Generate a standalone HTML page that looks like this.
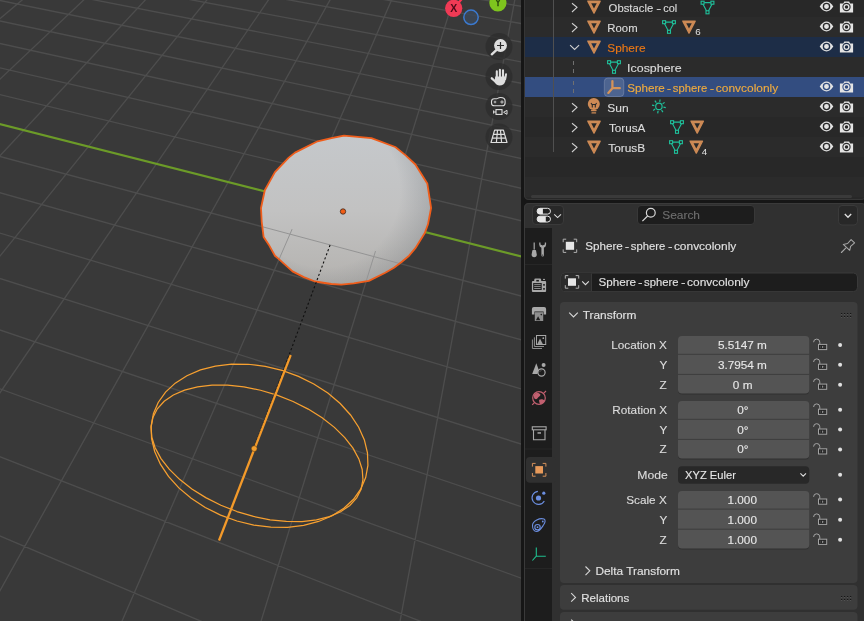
<!DOCTYPE html>
<html><head><meta charset="utf-8"><style>
html,body{margin:0;padding:0;background:#161616;overflow:hidden;width:864px;height:621px}
svg{display:block;will-change:transform}
text{font-family:"Liberation Sans",sans-serif;font-size:11px}
</style></head><body>
<svg width="864" height="621" viewBox="0 0 864 621">
<defs>
<clipPath id="vpc"><rect x="0" y="0" width="521" height="621"/></clipPath>
<clipPath id="sphc"><path d="M261 208L264.8 190.3L274.9 172.1L288.7 157.6L295 152.6L317.6 141.3L331.4 138.2L344 135.65L371.4 138.2L395.3 147L405.4 155.1L415.4 164.5L427.3 183.4L431.1 208L428 224.3L424.8 233.1L415.4 248.2L409.1 255.7L401.6 262L394 267.7L385.3 272.7L368.9 280.9L353.8 283.4L341.3 284.6L331.4 284L315.1 281.5L303.8 277.1L292.5 271.4L278.6 258.9L274.9 255.7L268.6 244.4L263.6 236.9L261.7 221.8Z"/></clipPath>
<clipPath id="below"><path d="M240 215.5L440 268L440 300L240 300Z"/></clipPath>
<linearGradient id="sgl" gradientUnits="userSpaceOnUse" x1="0" y1="136" x2="0" y2="285">
<stop offset="0" stop-color="#c5c8cb"/><stop offset="0.5" stop-color="#c2c2c2"/><stop offset="1" stop-color="#b4b2af"/>
</linearGradient>
<radialGradient id="sgr" gradientUnits="userSpaceOnUse" cx="335" cy="200" r="112" fx="300" fy="172">
<stop offset="0" stop-color="#1e2a36" stop-opacity="0"/><stop offset="0.68" stop-color="#1e2a36" stop-opacity="0"/><stop offset="0.88" stop-color="#1e2a36" stop-opacity="0.14"/><stop offset="1" stop-color="#1e2a36" stop-opacity="0.36"/>
</radialGradient>

<g id="meshico" fill="none" stroke="#1fc09b" stroke-width="1.1">
<path d="M-3.2 -4.9H3.2M-4.6 -3.4L-0.9 3.4M4.6 -3.4L0.9 3.4"/>
<rect x="-6.4" y="-6.3" width="3" height="3"/><rect x="3.4" y="-6.3" width="3" height="3"/><rect x="-1.5" y="3.3" width="3" height="3"/>
</g>
<g id="eye"><path d="M-6.8 0Q-3.5 -4.8 0 -4.8Q3.5 -4.8 6.8 0Q3.5 4.8 0 4.8Q-3.5 4.8 -6.8 0Z" fill="#e4e4e4"/><circle r="3.1" fill="none" stroke="#282828" stroke-width="1.2"/><circle r="1.3" fill="#e4e4e4"/></g>
<g id="cam"><path d="M-6.6 -3.6H-3.2L-2.2 -5.6H2.6L3.6 -3.6H6.6V5.5H-6.6Z" fill="#e4e4e4"/><circle r="3.6" fill="none" stroke="#282828" stroke-width="1.1"/><circle r="1.6" fill="#282828"/></g>
<g id="lock"><rect x="0.5" y="-4.6" width="8.2" height="5.2" fill="#262626" stroke="#a4a4a4" stroke-width="1"/><path d="M-4.4 -6.8A3.1 3.1 0 0 1 1.8 -6.8V-4.9" fill="none" stroke="#a4a4a4" stroke-width="1"/><rect x="4.2" y="-3.1" width="1" height="2.2" rx="0.5" fill="#a4a4a4"/><rect x="2.1" y="-3.1" width="0.5" height="2.2" fill="#5a5a5a"/><rect x="6.7" y="-3.1" width="0.5" height="2.2" fill="#5a5a5a"/></g>
</defs>
<g clip-path="url(#vpc)">
<rect x="0" y="0" width="521" height="621" fill="#393939"/>
<path d="M476.49 -447.79L-1530.19 268.68M482.01 -447.71L-1501.15 293.30M487.56 -447.62L-1470.17 319.57M493.13 -447.53L-1437.05 347.66M498.71 -447.45L-1401.56 377.75M504.32 -447.36L-1363.43 410.08M509.96 -447.27L-1322.37 444.91M515.61 -447.18L-1278.00 482.52M521.28 -447.09L-1229.94 523.28M526.98 -447.01L-1177.68 567.60M532.70 -446.92L-1120.65 615.95M538.44 -446.83L-1058.18 668.93M544.20 -446.74L-989.44 727.22M549.99 -446.65L-913.44 791.67M555.79 -446.56L-828.96 863.30M561.62 -446.47L-734.51 943.40M567.48 -446.37L-628.20 1033.54M573.35 -446.28L-507.65 1135.76M579.25 -446.19L-369.80 1252.66M585.18 -446.10L-210.64 1387.62M591.12 -446.01L-24.80 1545.21M597.09 -445.91L195.03 1731.62M603.08 -445.82L459.11 1955.56M609.10 -445.73L782.31 2229.62M615.14 -445.63L1186.99 2572.77M621.21 -445.54L1708.38 3014.90M627.30 -445.44L2405.48 3606.03M633.41 -445.35L3385.15 4436.76M639.55 -445.25L4862.83 5689.80M645.71 -445.16L7347.69 7796.90M651.90 -445.06L12401.82 12082.67M658.11 -444.96L28275.12 25542.83M664.35 -444.87L-438996.55 -370691.83M670.61 -444.77L-29345.89 -23318.34M676.90 -444.67L-16315.29 -12268.72M-1714.75 -432.75L906.41 -211.31M-1723.88 -432.51L912.02 -206.03M-1733.09 -432.26L917.84 -200.56M-1742.37 -432.02L923.88 -194.87M-1751.72 -431.77L930.17 -188.96M-1761.15 -431.52L936.70 -182.81M-1770.65 -431.27L943.51 -176.40M-1780.23 -431.02L950.60 -169.73M-1789.89 -430.76L958.00 -162.77M-1799.62 -430.51L965.72 -155.50M-1809.44 -430.25L973.79 -147.91M-1819.34 -429.99L982.22 -139.97M-1829.31 -429.72L991.06 -131.66M-1839.37 -429.46L1000.32 -122.95M-1849.52 -429.19L1010.03 -113.80M-1859.74 -428.92L1020.24 -104.20M-1870.06 -428.65L1030.97 -94.10M-1880.46 -428.37L1042.28 -83.46M-1890.94 -428.10L1054.20 -72.24M-1901.52 -427.82L1066.79 -60.39M-1912.19 -427.53L1080.11 -47.86M-1922.94 -427.25L1094.23 -34.57M-1933.79 -426.96L1109.21 -20.48M-1944.74 -426.68L1125.14 -5.49M-1955.77 -426.38L1142.11 10.48M-1966.91 -426.09L1160.22 27.53M-1978.14 -425.79L1179.61 45.77M-1989.47 -425.49L1200.40 65.33M-2000.90 -425.19L1222.75 86.37M-2012.43 -424.89L1246.85 109.04M-2024.06 -424.58L1272.91 133.57M-2035.80 -424.27L1301.18 160.17M-2047.64 -423.96L1331.95 189.12M-2059.59 -423.64L1365.57 220.76M-2071.65 -423.32L1402.46 255.47M-2083.81 -423.00L1443.11 293.72M-2096.09 -422.68L1488.13 336.09M-2108.48 -422.35L1538.28 383.28M-2120.98 -422.02L1594.46 436.15M-2133.60 -421.69L1657.86 495.81M-2159.20 -421.01L1812.63 641.45M-2172.17 -420.67L1908.45 731.61M-2185.27 -420.32L2020.80 837.34M-2198.50 -419.98L2154.37 963.02M-2211.84 -419.62L2315.78 1114.91M-2225.32 -419.27L2514.76 1302.16M-2238.93 -418.91L2766.15 1538.72M-2252.67 -418.55L3093.81 1847.05M-2266.54 -418.18L3538.64 2265.64M-2280.54 -417.81L4177.18 2866.51M-2294.69 -417.44L5171.17 3801.86M-2308.97 -417.06L6931.91 5458.72M-2323.39 -416.68L10903.53 9196.05" stroke="#4d4d4d" stroke-width="1.35" fill="none"/>
<path d="M-2146.34 -421.35L1729.94 563.63" stroke="#6c9b28" stroke-width="2.2" fill="none"/>
<path d="M261 208L264.8 190.3L274.9 172.1L288.7 157.6L295 152.6L317.6 141.3L331.4 138.2L344 135.65L371.4 138.2L395.3 147L405.4 155.1L415.4 164.5L427.3 183.4L431.1 208L428 224.3L424.8 233.1L415.4 248.2L409.1 255.7L401.6 262L394 267.7L385.3 272.7L368.9 280.9L353.8 283.4L341.3 284.6L331.4 284L315.1 281.5L303.8 277.1L292.5 271.4L278.6 258.9L274.9 255.7L268.6 244.4L263.6 236.9L261.7 221.8Z" fill="url(#sgl)"/><path d="M261 208L264.8 190.3L274.9 172.1L288.7 157.6L295 152.6L317.6 141.3L331.4 138.2L344 135.65L371.4 138.2L395.3 147L405.4 155.1L415.4 164.5L427.3 183.4L431.1 208L428 224.3L424.8 233.1L415.4 248.2L409.1 255.7L401.6 262L394 267.7L385.3 272.7L368.9 280.9L353.8 283.4L341.3 284.6L331.4 284L315.1 281.5L303.8 277.1L292.5 271.4L278.6 258.9L274.9 255.7L268.6 244.4L263.6 236.9L261.7 221.8Z" fill="url(#sgr)"/>
<g clip-path="url(#sphc)"><g clip-path="url(#below)"><path d="M476.49 -447.79L-1530.19 268.68M482.01 -447.71L-1501.15 293.30M487.56 -447.62L-1470.17 319.57M493.13 -447.53L-1437.05 347.66M498.71 -447.45L-1401.56 377.75M504.32 -447.36L-1363.43 410.08M509.96 -447.27L-1322.37 444.91M515.61 -447.18L-1278.00 482.52M521.28 -447.09L-1229.94 523.28M526.98 -447.01L-1177.68 567.60M532.70 -446.92L-1120.65 615.95M538.44 -446.83L-1058.18 668.93M544.20 -446.74L-989.44 727.22M549.99 -446.65L-913.44 791.67M555.79 -446.56L-828.96 863.30M561.62 -446.47L-734.51 943.40M567.48 -446.37L-628.20 1033.54M573.35 -446.28L-507.65 1135.76M579.25 -446.19L-369.80 1252.66M585.18 -446.10L-210.64 1387.62M591.12 -446.01L-24.80 1545.21M597.09 -445.91L195.03 1731.62M603.08 -445.82L459.11 1955.56M609.10 -445.73L782.31 2229.62M615.14 -445.63L1186.99 2572.77M621.21 -445.54L1708.38 3014.90M627.30 -445.44L2405.48 3606.03M633.41 -445.35L3385.15 4436.76M639.55 -445.25L4862.83 5689.80M645.71 -445.16L7347.69 7796.90M651.90 -445.06L12401.82 12082.67M658.11 -444.96L28275.12 25542.83M664.35 -444.87L-438996.55 -370691.83M670.61 -444.77L-29345.89 -23318.34M676.90 -444.67L-16315.29 -12268.72M-1714.75 -432.75L906.41 -211.31M-1723.88 -432.51L912.02 -206.03M-1733.09 -432.26L917.84 -200.56M-1742.37 -432.02L923.88 -194.87M-1751.72 -431.77L930.17 -188.96M-1761.15 -431.52L936.70 -182.81M-1770.65 -431.27L943.51 -176.40M-1780.23 -431.02L950.60 -169.73M-1789.89 -430.76L958.00 -162.77M-1799.62 -430.51L965.72 -155.50M-1809.44 -430.25L973.79 -147.91M-1819.34 -429.99L982.22 -139.97M-1829.31 -429.72L991.06 -131.66M-1839.37 -429.46L1000.32 -122.95M-1849.52 -429.19L1010.03 -113.80M-1859.74 -428.92L1020.24 -104.20M-1870.06 -428.65L1030.97 -94.10M-1880.46 -428.37L1042.28 -83.46M-1890.94 -428.10L1054.20 -72.24M-1901.52 -427.82L1066.79 -60.39M-1912.19 -427.53L1080.11 -47.86M-1922.94 -427.25L1094.23 -34.57M-1933.79 -426.96L1109.21 -20.48M-1944.74 -426.68L1125.14 -5.49M-1955.77 -426.38L1142.11 10.48M-1966.91 -426.09L1160.22 27.53M-1978.14 -425.79L1179.61 45.77M-1989.47 -425.49L1200.40 65.33M-2000.90 -425.19L1222.75 86.37M-2012.43 -424.89L1246.85 109.04M-2024.06 -424.58L1272.91 133.57M-2035.80 -424.27L1301.18 160.17M-2047.64 -423.96L1331.95 189.12M-2059.59 -423.64L1365.57 220.76M-2071.65 -423.32L1402.46 255.47M-2083.81 -423.00L1443.11 293.72M-2096.09 -422.68L1488.13 336.09M-2108.48 -422.35L1538.28 383.28M-2120.98 -422.02L1594.46 436.15M-2133.60 -421.69L1657.86 495.81M-2159.20 -421.01L1812.63 641.45M-2172.17 -420.67L1908.45 731.61M-2185.27 -420.32L2020.80 837.34M-2198.50 -419.98L2154.37 963.02M-2211.84 -419.62L2315.78 1114.91M-2225.32 -419.27L2514.76 1302.16M-2238.93 -418.91L2766.15 1538.72M-2252.67 -418.55L3093.81 1847.05M-2266.54 -418.18L3538.64 2265.64M-2280.54 -417.81L4177.18 2866.51M-2294.69 -417.44L5171.17 3801.86M-2308.97 -417.06L6931.91 5458.72M-2323.39 -416.68L10903.53 9196.05" stroke="#949494" stroke-width="1" fill="none"/></g></g>
<path d="M261 208L264.8 190.3L274.9 172.1L288.7 157.6L295 152.6L317.6 141.3L331.4 138.2L344 135.65L371.4 138.2L395.3 147L405.4 155.1L415.4 164.5L427.3 183.4L431.1 208L428 224.3L424.8 233.1L415.4 248.2L409.1 255.7L401.6 262L394 267.7L385.3 272.7L368.9 280.9L353.8 283.4L341.3 284.6L331.4 284L315.1 281.5L303.8 277.1L292.5 271.4L278.6 258.9L274.9 255.7L268.6 244.4L263.6 236.9L261.7 221.8Z" fill="none" stroke="#ef5d1b" stroke-width="1.8" stroke-linejoin="round"/>
<circle cx="343" cy="211.5" r="2.7" fill="#f25c14" stroke="#3a2a20" stroke-width="0.8"/>
<path d="M330.1 245L254.2 448.6" stroke="#111" stroke-width="1.1" stroke-dasharray="2.2 2.2" fill="none"/>
<path d="M153.37 413.86L158.21 402.47L165.55 392.15L175.20 383.15L186.92 375.68L200.43 369.94L215.40 366.07L231.46 364.16L248.20 364.25L265.23 366.36L282.11 370.41L298.44 376.32L313.81 383.94L327.85 393.08L340.20 403.51L350.56 414.98L358.68 427.21L364.37 439.90L367.47 452.73L367.91 465.38L365.68 477.55L360.84 488.94L353.50 499.26L343.85 508.26L332.13 515.73L318.62 521.47L303.65 525.34L287.59 527.25L270.85 527.16L253.82 525.05L236.94 521.00L220.61 515.09L205.24 507.47L191.20 498.33L178.85 487.90L168.49 476.43L160.37 464.20L154.68 451.51L151.58 438.68L151.14 426.03Z" fill="none" stroke="#f7a030" stroke-width="1.25"/>
<path d="M236.95 511.54L220.91 505.21L205.76 497.61L191.88 488.91L179.59 479.34L169.21 469.13L161.00 458.54L155.14 447.81L151.80 437.22L151.05 427.03L152.90 417.48L157.32 408.82L164.19 401.25L173.35 394.97L184.56 390.13L197.57 386.84L212.03 385.19L227.60 385.21L243.90 386.92L260.51 390.26L277.05 395.15L293.08 401.48L308.23 409.08L322.12 417.78L334.40 427.35L344.78 437.55L353.00 448.15L358.85 458.88L362.20 469.47L362.95 479.66L361.10 489.21L356.68 497.87L349.81 505.43L340.65 511.72L329.43 516.56L316.43 519.85L301.97 521.50L286.40 521.47L270.10 519.77L253.48 516.43Z" fill="none" stroke="#f7a030" stroke-width="1.25"/>
<path d="M290.7 355L219 540.5" stroke="#f39a2a" stroke-width="2.3" fill="none"/>
<path d="M289.3 354.5L254 446" stroke="#222" stroke-width="0.7" stroke-dasharray="1.5 1.5" fill="none" opacity="0.8"/>
<circle cx="254.2" cy="448.6" r="2.9" fill="#f3a030" stroke="#4a3010" stroke-width="0.5"/>

<path d="M453.7 8.3L468 -8" stroke="#ff3352" stroke-width="2.2"/>
<circle cx="453.7" cy="8.3" r="8.6" fill="#f03a55"/>
<circle cx="497.9" cy="2.9" r="8.6" fill="#7ec41e"/>
<circle cx="471" cy="17.3" r="7.2" fill="#3c4857" fill-opacity="0.85" stroke="#3b7ad0" stroke-width="1.5"/>
<text x="453.8" y="12.2" text-anchor="middle" fill="#4d0a18" style="font-size:10.5px;font-weight:bold">X</text>
<text x="497.9" y="6.2" text-anchor="middle" fill="#25400a" stroke="#25400a" stroke-width="0.3" style="font-size:10.5px">Y</text>

<circle cx="499" cy="46.5" r="13.5" fill="#2d2d2d" fill-opacity="0.8"/>
<circle cx="499" cy="76.5" r="13.5" fill="#2d2d2d" fill-opacity="0.8"/>
<circle cx="499" cy="106.5" r="13.5" fill="#2d2d2d" fill-opacity="0.8"/>
<circle cx="499" cy="137" r="13.5" fill="#2d2d2d" fill-opacity="0.8"/>
<circle cx="500.5" cy="45.5" r="6.4" fill="#dedede"/>
<path d="M500.5 42V49M497 45.5H504" stroke="#2a2a2a" stroke-width="1.2"/>
<path d="M496.8 49.6L491.8 54.3" stroke="#dedede" stroke-width="2.4" stroke-linecap="round"/>
<g fill="none" stroke="#dedede" stroke-linecap="round"><path d="M496.8 71.2V78M499.9 69.7V77M503 70.3V77.5" stroke-width="2.1"/><path d="M506 74.3L505.2 79" stroke-width="2"/><path d="M491.8 78.3L495.3 81.5" stroke-width="2.3"/></g><path d="M495.2 76.5H506.2L505.3 81.2Q504 85.6 499.6 85.6Q496.6 85.6 494.6 82.3Z" fill="#dedede"/>
<path d="M491.5 101.5a2.8 2.8 0 0 1 2.8 -2.8h2.5c0.8 0 1.3 -1.2 3.8 -1.2c3 0 4.5 1.6 4.5 3.6v1.8c0 1.4 -1.2 2.8 -2.8 2.8h-8c-1.6 0 -2.8 -1.2 -2.8 -2.8z" fill="none" stroke="#dedede" stroke-width="1.1"/>
<circle cx="502" cy="102" r="1.1" fill="none" stroke="#dedede" stroke-width="0.9"/>
<path d="M493.7 102H496.3M495 100.7V103.3" stroke="#dedede" stroke-width="0.8"/>
<rect x="496" y="109.6" width="6" height="4.8" fill="none" stroke="#dedede" stroke-width="1.1"/>
<path d="M493.6 110.4V113.6M493.6 112H496" stroke="#dedede" stroke-width="1"/>
<path d="M507 110.3V114.3L503.6 112.3Z" fill="none" stroke="#dedede" stroke-width="1"/>
<path d="M494.6 130.2H503.4L507 142.5H491Z M492.8 134.3H505.2M492 138.2H506M497.5 130.2L496.4 142.5M500.5 130.2L501.6 142.5" fill="none" stroke="#dedede" stroke-width="1.2" stroke-linejoin="round"/>
</g>
<path d="M524 0H866V195Q866 200 861 200H529Q524 200 524 195Z" fill="#282828"/>
<rect x="524" y="17" width="340" height="20" fill="#2b2b2b"/>
<rect x="524" y="57" width="340" height="20" fill="#2b2b2b"/>
<rect x="524" y="97" width="340" height="20" fill="#2b2b2b"/>
<rect x="524" y="137" width="340" height="20" fill="#2b2b2b"/>
<rect x="524" y="177" width="340" height="20" fill="#2b2b2b"/>
<rect x="524" y="37" width="340" height="20" fill="#1d2d47"/>
<rect x="524" y="77" width="340" height="20" fill="#334d80"/>
<rect x="553" y="0" width="1" height="152" fill="#505050"/>
<path d="M573.5 61V65M573.5 69V73M573.5 81V85M573.5 89V93" stroke="#707070" stroke-width="1"/>
<text transform="translate(608.60 11.9) scale(1.0279 1)" fill="#dcdcdc" stroke="#dcdcdc" stroke-width="0.12">Obstacle</text><text transform="translate(656.25 11.9) scale(1.3833 1)" fill="#dcdcdc" stroke="#dcdcdc" stroke-width="0.12">-</text><text transform="translate(663.20 11.9) scale(0.9929 1)" fill="#dcdcdc" stroke="#dcdcdc" stroke-width="0.12">col</text>
<text transform="translate(607.37 31.9) scale(1.0321 1)" fill="#dcdcdc" stroke="#dcdcdc" stroke-width="0.12">Room</text>
<text transform="translate(607.22 51.9) scale(1.0794 1)" fill="#ec7814" stroke="#ec7814" stroke-width="0.12">Sphere</text>
<text transform="translate(627.12 71.9) scale(1.1277 1)" fill="#dcdcdc" stroke="#dcdcdc" stroke-width="0.12">Icosphere</text>
<text transform="translate(627.19 91.9) scale(1.0618 1)" fill="#f2ac3c" stroke="#f2ac3c" stroke-width="0.12">Sphere</text><text transform="translate(666.65 91.9) scale(1.2333 1)" fill="#f2ac3c" stroke="#f2ac3c" stroke-width="0.12">-</text><text transform="translate(672.75 91.9) scale(1.0242 1)" fill="#f2ac3c" stroke="#f2ac3c" stroke-width="0.12">sphere</text><text transform="translate(709.85 91.9) scale(1.2333 1)" fill="#f2ac3c" stroke="#f2ac3c" stroke-width="0.12">-</text><text transform="translate(715.85 91.9) scale(1.0862 1)" fill="#f2ac3c" stroke="#f2ac3c" stroke-width="0.12">convcolonly</text>
<text transform="translate(607.21 111.9) scale(1.0944 1)" fill="#dcdcdc" stroke="#dcdcdc" stroke-width="0.12">Sun</text>
<text transform="translate(609.00 131.9) scale(1.0618 1)" fill="#dcdcdc" stroke="#dcdcdc" stroke-width="0.12">TorusA</text>
<text transform="translate(608.20 151.9) scale(1.0824 1)" fill="#dcdcdc" stroke="#dcdcdc" stroke-width="0.12">TorusB</text>
<path d="M819.7 6.5Q823.0 1.5999999999999996 826.5 1.5999999999999996Q830.0 1.5999999999999996 833.3 6.5Q830.0 11.4 826.5 11.4Q823.0 11.4 819.7 6.5Z" fill="#e4e4e4"/><circle cx="826.5" cy="6.5" r="3.1" fill="none" stroke="#282828" stroke-width="1.35"/><circle cx="826.5" cy="6.5" r="1.25" fill="#e4e4e4"/>
<path d="M839.9 3.4H843.3L844.3 1.4000000000000004H849.1L850.1 3.4H853.1V12.5H839.9Z" fill="#e4e4e4"/><circle cx="846.5" cy="7" r="3.6" fill="none" stroke="#282828" stroke-width="1.1"/><circle cx="846.5" cy="7" r="1.7" fill="#282828"/>
<path d="M819.7 26.5Q823.0 21.6 826.5 21.6Q830.0 21.6 833.3 26.5Q830.0 31.4 826.5 31.4Q823.0 31.4 819.7 26.5Z" fill="#e4e4e4"/><circle cx="826.5" cy="26.5" r="3.1" fill="none" stroke="#2b2b2b" stroke-width="1.35"/><circle cx="826.5" cy="26.5" r="1.25" fill="#e4e4e4"/>
<path d="M839.9 23.4H843.3L844.3 21.4H849.1L850.1 23.4H853.1V32.5H839.9Z" fill="#e4e4e4"/><circle cx="846.5" cy="27" r="3.6" fill="none" stroke="#2b2b2b" stroke-width="1.1"/><circle cx="846.5" cy="27" r="1.7" fill="#2b2b2b"/>
<path d="M819.7 46.5Q823.0 41.6 826.5 41.6Q830.0 41.6 833.3 46.5Q830.0 51.4 826.5 51.4Q823.0 51.4 819.7 46.5Z" fill="#e4e4e4"/><circle cx="826.5" cy="46.5" r="3.1" fill="none" stroke="#1d2d47" stroke-width="1.35"/><circle cx="826.5" cy="46.5" r="1.25" fill="#e4e4e4"/>
<path d="M839.9 43.4H843.3L844.3 41.4H849.1L850.1 43.4H853.1V52.5H839.9Z" fill="#e4e4e4"/><circle cx="846.5" cy="47" r="3.6" fill="none" stroke="#1d2d47" stroke-width="1.1"/><circle cx="846.5" cy="47" r="1.7" fill="#1d2d47"/>
<path d="M819.7 86.5Q823.0 81.6 826.5 81.6Q830.0 81.6 833.3 86.5Q830.0 91.4 826.5 91.4Q823.0 91.4 819.7 86.5Z" fill="#e4e4e4"/><circle cx="826.5" cy="86.5" r="3.1" fill="none" stroke="#334d80" stroke-width="1.35"/><circle cx="826.5" cy="86.5" r="1.25" fill="#e4e4e4"/>
<path d="M839.9 83.4H843.3L844.3 81.4H849.1L850.1 83.4H853.1V92.5H839.9Z" fill="#e4e4e4"/><circle cx="846.5" cy="87" r="3.6" fill="none" stroke="#334d80" stroke-width="1.1"/><circle cx="846.5" cy="87" r="1.7" fill="#334d80"/>
<path d="M819.7 106.5Q823.0 101.6 826.5 101.6Q830.0 101.6 833.3 106.5Q830.0 111.4 826.5 111.4Q823.0 111.4 819.7 106.5Z" fill="#e4e4e4"/><circle cx="826.5" cy="106.5" r="3.1" fill="none" stroke="#2b2b2b" stroke-width="1.35"/><circle cx="826.5" cy="106.5" r="1.25" fill="#e4e4e4"/>
<path d="M839.9 103.4H843.3L844.3 101.4H849.1L850.1 103.4H853.1V112.5H839.9Z" fill="#e4e4e4"/><circle cx="846.5" cy="107" r="3.6" fill="none" stroke="#2b2b2b" stroke-width="1.1"/><circle cx="846.5" cy="107" r="1.7" fill="#2b2b2b"/>
<path d="M819.7 126.5Q823.0 121.6 826.5 121.6Q830.0 121.6 833.3 126.5Q830.0 131.4 826.5 131.4Q823.0 131.4 819.7 126.5Z" fill="#e4e4e4"/><circle cx="826.5" cy="126.5" r="3.1" fill="none" stroke="#282828" stroke-width="1.35"/><circle cx="826.5" cy="126.5" r="1.25" fill="#e4e4e4"/>
<path d="M839.9 123.4H843.3L844.3 121.4H849.1L850.1 123.4H853.1V132.5H839.9Z" fill="#e4e4e4"/><circle cx="846.5" cy="127" r="3.6" fill="none" stroke="#282828" stroke-width="1.1"/><circle cx="846.5" cy="127" r="1.7" fill="#282828"/>
<path d="M819.7 146.5Q823.0 141.6 826.5 141.6Q830.0 141.6 833.3 146.5Q830.0 151.4 826.5 151.4Q823.0 151.4 819.7 146.5Z" fill="#e4e4e4"/><circle cx="826.5" cy="146.5" r="3.1" fill="none" stroke="#2b2b2b" stroke-width="1.35"/><circle cx="826.5" cy="146.5" r="1.25" fill="#e4e4e4"/>
<path d="M839.9 143.4H843.3L844.3 141.4H849.1L850.1 143.4H853.1V152.5H839.9Z" fill="#e4e4e4"/><circle cx="846.5" cy="147" r="3.6" fill="none" stroke="#2b2b2b" stroke-width="1.1"/><circle cx="846.5" cy="147" r="1.7" fill="#2b2b2b"/>
<path d="M572 3.3L577 7.300000000000001L572 12" fill="none" stroke="#d0d0d0" stroke-width="1.1"/>
<path d="M572 23.3L577 27.3L572 32" fill="none" stroke="#d0d0d0" stroke-width="1.1"/>
<path d="M572 103.3L577 107.3L572 112" fill="none" stroke="#d0d0d0" stroke-width="1.1"/>
<path d="M572 123.3L577 127.3L572 132" fill="none" stroke="#d0d0d0" stroke-width="1.1"/>
<path d="M572 143.3L577 147.3L572 152" fill="none" stroke="#d0d0d0" stroke-width="1.1"/>
<path d="M570.1 45.1L574.6 49.5L579.1 45.1" fill="none" stroke="#d0d0d0" stroke-width="1.1"/>
<path d="M587.80 1.10H600.20L594 13.10Z" fill="#cd8a55" stroke="#cd8a55" stroke-width="1.3" stroke-linejoin="round"/><path d="M591.25 3.20H596.75L594 8.50Z" fill="#282828"/>
<path d="M587.80 21.10H600.20L594 33.10Z" fill="#cd8a55" stroke="#cd8a55" stroke-width="1.3" stroke-linejoin="round"/><path d="M591.25 23.20H596.75L594 28.50Z" fill="#2b2b2b"/>
<path d="M587.80 41.10H600.20L594 53.10Z" fill="#cd8a55" stroke="#cd8a55" stroke-width="1.3" stroke-linejoin="round"/><path d="M591.25 43.20H596.75L594 48.50Z" fill="#1d2d47"/>
<path d="M587.80 121.10H600.20L594 133.10Z" fill="#cd8a55" stroke="#cd8a55" stroke-width="1.3" stroke-linejoin="round"/><path d="M591.25 123.20H596.75L594 128.50Z" fill="#282828"/>
<path d="M587.80 141.10H600.20L594 153.10Z" fill="#cd8a55" stroke="#cd8a55" stroke-width="1.3" stroke-linejoin="round"/><path d="M591.25 143.20H596.75L594 148.50Z" fill="#2b2b2b"/>
<use href="#meshico" x="707.5" y="7.5"/>
<use href="#meshico" x="669" y="27"/>
<use href="#meshico" x="614" y="67"/>
<use href="#meshico" x="677" y="127"/>
<use href="#meshico" x="676" y="147"/>
<path d="M682.80 21.10H695.20L689 33.10Z" fill="#cd8a55" stroke="#cd8a55" stroke-width="1.3" stroke-linejoin="round"/><path d="M686.25 23.20H691.75L689 28.50Z" fill="#2b2b2b"/><text x="695.2" y="35.1" fill="#e0e0e0" style="font-size:9.8px">6</text>
<path d="M691.00 121.10H703.40L697.2 133.10Z" fill="#cd8a55" stroke="#cd8a55" stroke-width="1.3" stroke-linejoin="round"/><path d="M694.45 123.20H699.95L697.2 128.50Z" fill="#282828"/>
<path d="M690.10 141.10H702.50L696.3 153.10Z" fill="#cd8a55" stroke="#cd8a55" stroke-width="1.3" stroke-linejoin="round"/><path d="M693.55 143.20H699.05L696.3 148.50Z" fill="#2b2b2b"/><text x="701.8" y="155.1" fill="#e0e0e0" style="font-size:9.8px">4</text>
<rect x="604.3" y="78" width="19.5" height="18.5" rx="3.5" fill="#ffffff" fill-opacity="0.13" stroke="#ffffff" stroke-opacity="0.18" stroke-width="1"/>
<path d="M612.4 81.2V88.2H619.8M612.4 88.2L608.3 92.9" fill="none" stroke="#d4935a" stroke-width="2.3" stroke-linecap="round" stroke-linejoin="round"/>
<circle cx="593.8" cy="103.9" r="6" fill="#cd8a55"/><rect x="591.2" y="107.5" width="5.2" height="1.8" fill="#cd8a55"/>
<rect x="590.9" y="109.9" width="5.8" height="1.3" rx="0.6" fill="#cd8a55"/><rect x="591.4" y="112.2" width="4.8" height="1.3" rx="0.6" fill="#cd8a55"/>
<path d="M591 103L592 104.5H595.6L596.6 103M592.3 104.5V107.5M595.3 104.5V107.5" fill="none" stroke="#2a2a2a" stroke-width="1.1"/>
<g stroke="#1fc09b" stroke-width="1.2" fill="none"><circle cx="658.9" cy="106.4" r="3.2"/>
<path d="M663.43 107.20L665.79 107.62"/>
<path d="M661.54 110.17L662.92 112.13"/>
<path d="M658.10 110.93L657.68 113.29"/>
<path d="M655.13 109.04L653.17 110.42"/>
<path d="M654.37 105.60L652.01 105.18"/>
<path d="M656.26 102.63L654.88 100.67"/>
<path d="M659.70 101.87L660.12 99.51"/>
<path d="M662.67 103.76L664.63 102.38"/>
</g>
<rect x="531" y="195" width="321" height="3" rx="1.5" fill="#3a3a3a"/>
<path d="M524.5 0V195Q524.5 199.5 529 199.5H861Q865.5 199.5 865.5 195V0" fill="none" stroke="#363636" stroke-width="1"/>
<path d="M529 203H861Q866 203 866 208V621H524V208Q524 203 529 203Z" fill="#303030"/>
<path d="M524.5 621V208Q524.5 203.5 529 203.5H861Q865.5 203.5 865.5 208V621" fill="none" stroke="#3a3a3a" stroke-width="1"/>
<rect x="525" y="228" width="27" height="393" fill="#1d1d1d"/>
<rect x="532.5" y="205.5" width="31" height="19" rx="3.5" fill="#282828" stroke="#3a3a3a"/>
<path d="M540 208.3H547.6A2.9 2.9 0 0 1 547.6 214.1H540A2.9 2.9 0 0 1 540 208.3Z M540 216.2H547.6A2.9 2.9 0 0 1 547.6 222H540A2.9 2.9 0 0 1 540 216.2Z" fill="#202020" stroke="#e6e6e6" stroke-width="1"/>
<path d="M540 208.3H542.9V214.1H540A2.9 2.9 0 0 1 540 208.3Z M540 216.2H545.8V222H540A2.9 2.9 0 0 1 540 216.2Z" fill="#e6e6e6"/>
<path d="M554.2 214.3L557.6 217.6L561 214.3" fill="none" stroke="#dcdcdc" stroke-width="1.1"/>
<rect x="637.5" y="205.5" width="117" height="19" rx="3.5" fill="#1d1d1d" stroke="#383838"/>
<circle cx="650.8" cy="212.8" r="4.4" fill="none" stroke="#d8d8d8" stroke-width="1.2"/><path d="M647.6 216L642.4 221.2" stroke="#d8d8d8" stroke-width="1.2"/>
<text transform="translate(662.22 218.7) scale(1.0848 1)" fill="#6e6e6e" stroke="#6e6e6e" stroke-width="0.12">Search</text>
<rect x="838.5" y="205.5" width="19" height="19.5" rx="3.5" fill="#282828" stroke="#3a3a3a"/>
<path d="M844.8 214L848 217.3L851.2 214" fill="none" stroke="#e0e0e0" stroke-width="1.3"/>
<path d="M534.2 242.6V249.5" stroke="#a8a8a8" stroke-width="1.2"/><path d="M532.4 250.3Q534.2 249.3 536 250.3L536.8 254.6A2.6 2.6 0 0 1 531.6 254.6Z" fill="#a8a8a8"/>
<path d="M539.2 242.6V244.6A3.3 3.3 0 0 0 541.4 247.7V255.3A1.25 1.25 0 0 0 543.9 255.3V247.7A3.3 3.3 0 0 0 546.1 244.6V242.6H544.8V244.5L542.65 245.6L540.5 244.5V242.6Z" fill="#a8a8a8"/><circle cx="542.65" cy="255.1" r="0.55" fill="#1d1d1d"/>
<rect x="525" y="264" width="27" height="1" fill="#262626"/>
<rect x="531.9" y="281" width="14.2" height="11" rx="1" fill="#a8a8a8"/><path d="M534.2 281.5V280Q534.2 278.6 535.6 278.6H539.8Q541.2 278.6 541.2 280V281.5Z" fill="#a8a8a8"/>
<rect x="536.3" y="279.9" width="2.6" height="1.6" fill="#1d1d1d"/><rect x="543" y="278.9" width="2" height="1" fill="#a8a8a8"/>
<rect x="533.2" y="283" width="8.5" height="7" fill="#1d1d1d"/><path d="M534.2 284.4H540.7M534.2 286.4H540.7M534.2 288.5H540.7" stroke="#a8a8a8" stroke-width="0.8"/>
<rect x="543.2" y="284" width="1.6" height="1.7" fill="#1d1d1d"/><rect x="543.2" y="288" width="1.6" height="1.7" fill="#1d1d1d"/>
<path d="M531.9 309Q531.9 307 533.9 307H544.1Q546.1 307 546.1 309V314.5H543.6V311.6H534.4V314.5H531.9Z" fill="#a8a8a8"/>
<rect x="534.8" y="312.2" width="8.4" height="8.8" fill="#8e8e8e"/><path d="M535.9 320.2L538.1 316.2L540.3 320.2Z" fill="#1d1d1d"/><circle cx="541.3" cy="314.6" r="0.8" fill="#1d1d1d"/>
<rect x="536.5" y="335.5" width="9.2" height="9" fill="#1d1d1d" stroke="#a8a8a8" stroke-width="1"/><path d="M537.3 344L540 338.5L542.8 344Z" fill="#a0a0a0"/><circle cx="543.3" cy="338.2" r="0.85" fill="#a8a8a8"/>
<path d="M534.4 337.3V346.5H544M532.4 339.5V348.5H542" fill="none" stroke="#8e8e8e" stroke-width="1"/>
<path d="M532.2 374L536.3 363.3L539.5 372L537 374Z" fill="#a8a8a8"/><circle cx="543.6" cy="365" r="2" fill="#a8a8a8"/>
<circle cx="541.5" cy="372.5" r="3.6" fill="#1d1d1d" stroke="#a8a8a8" stroke-width="1.2"/><path d="M540 371.5L541 370.5" stroke="#a8a8a8" stroke-width="0.8"/>
<g stroke="#c26070" fill="none" stroke-width="1.2"><circle cx="539" cy="398" r="6.3"/><path d="M532.2 404.8L534.2 402.8M543.8 393.2L546 391"/></g>
<path d="M534.2 394.5C536 392.5 539.5 392.6 540.5 394.8C540.2 396.5 538.5 396.8 537.5 398.2C536.8 399.5 535.5 399.5 534.6 398.8C533.8 397.6 533.7 395.8 534.2 394.5Z M539.2 399.8C541 398.8 543.8 399.3 544.6 400.8C543.8 403 541.8 404.2 540.3 404.3C539.4 403 538.8 401.2 539.2 399.8Z" fill="#c26070"/>
<rect x="532.3" y="426.8" width="13.8" height="3" fill="none" stroke="#a8a8a8" stroke-width="1.1"/><path d="M533.5 430V439.8H545V430" fill="none" stroke="#a8a8a8" stroke-width="1.1"/><rect x="537.5" y="432.2" width="3.5" height="1.5" fill="#a8a8a8"/>
<rect x="525" y="448.5" width="27" height="1" fill="#262626"/>
<rect x="526" y="457" width="30" height="25.7" rx="4" fill="#303030"/>
<path d="M532.4 466.59999999999997V463.4H535.6M542.6999999999999 463.4H545.9V466.59999999999997M545.9 473.0V476.2H542.6999999999999M535.6 476.2H532.4V473.0" fill="none" stroke="#d4905a" stroke-width="1"/>
<rect x="535.3" y="466.1" width="7.7" height="7.4" fill="#e89a5a"/>
<path d="M544.3 500.9A6.5 6.5 0 1 1 537.9 491.4" fill="none" stroke="#6b8ee0" stroke-width="1.1"/><circle cx="538.5" cy="498" r="2.6" fill="#6b8ee0"/><circle cx="543.8" cy="493.2" r="1.6" fill="#6b8ee0"/>
<path d="M532.5 525.5C532.5 521 540 517.5 544 519C546 520 545 523 543.5 525C541.5 528 539.5 531.5 536.5 531.5C534 531.5 532.5 528.5 532.5 525.5Z" fill="none" stroke="#6b8ee0" stroke-width="1.1"/>
<circle cx="537.5" cy="527.2" r="2.7" fill="none" stroke="#6b8ee0" stroke-width="1.1"/><circle cx="537.5" cy="527.2" r="0.9" fill="#6b8ee0"/><circle cx="542.8" cy="521.5" r="0.9" fill="#6b8ee0"/>
<path d="M536.3 547.5V556.2H545.8M536.3 556.2L532.4 560.5" fill="none" stroke="#1fbf8f" stroke-width="1.1"/>
<rect x="525" y="568" width="27" height="1" fill="#262626"/>
<path d="M563.2 242.2V239.2H566.2M573.7 239.2H576.7V242.2M576.7 249.4V252.4H573.7M566.2 252.4H563.2V249.4" fill="none" stroke="#b0b0b0" stroke-width="1"/>
<rect x="565.8" y="241.8" width="8.3" height="8" fill="#e6e6e6"/>
<text transform="translate(585.24 250) scale(1.0618 1)" fill="#e2e2e2" stroke="#e2e2e2" stroke-width="0.12">Sphere</text><text transform="translate(624.70 250) scale(1.2333 1)" fill="#e2e2e2" stroke="#e2e2e2" stroke-width="0.12">-</text><text transform="translate(630.80 250) scale(1.0242 1)" fill="#e2e2e2" stroke="#e2e2e2" stroke-width="0.12">sphere</text><text transform="translate(667.90 250) scale(1.2333 1)" fill="#e2e2e2" stroke="#e2e2e2" stroke-width="0.12">-</text><text transform="translate(673.90 250) scale(1.0862 1)" fill="#e2e2e2" stroke="#e2e2e2" stroke-width="0.12">convcolonly</text>
<path d="M841.4 252.5L845.7 248.1" stroke="#a8a8a8" stroke-width="1.1" stroke-linecap="round"/><path d="M843.3 244.4L847.6 243.5L851.1 239.6L854.6 242.9L850.6 246.4L849.7 250.3Z" fill="none" stroke="#a8a8a8" stroke-width="1.05" stroke-linejoin="round"/>
<rect x="561" y="273" width="296.5" height="18.6" rx="4" fill="#1d1d1d" stroke="#3a3a3a"/>
<path d="M565 273.5H591V291.1H565A3.5 3.5 0 0 1 561.5 287.6V277A3.5 3.5 0 0 1 565 273.5Z" fill="#2b2b2b"/>
<rect x="591" y="273.5" width="1" height="17.6" fill="#383838"/>
<path d="M565.3 278.6V275.6H568.3M575.7 275.6H578.7V278.6M578.7 285.2V288.2H575.7M568.3 288.2H565.3V285.2" fill="none" stroke="#b0b0b0" stroke-width="1"/>
<rect x="568" y="278.3" width="8" height="7.5" fill="#e6e6e6"/>
<path d="M582.2 281.4L585.5 284.7L588.8 281.4" fill="none" stroke="#dcdcdc" stroke-width="1.1"/>
<text transform="translate(598.44 285.5) scale(1.0618 1)" fill="#e2e2e2" stroke="#e2e2e2" stroke-width="0.12">Sphere</text><text transform="translate(637.90 285.5) scale(1.2333 1)" fill="#e2e2e2" stroke="#e2e2e2" stroke-width="0.12">-</text><text transform="translate(644.00 285.5) scale(1.0242 1)" fill="#e2e2e2" stroke="#e2e2e2" stroke-width="0.12">sphere</text><text transform="translate(681.10 285.5) scale(1.2333 1)" fill="#e2e2e2" stroke="#e2e2e2" stroke-width="0.12">-</text><text transform="translate(687.10 285.5) scale(1.0862 1)" fill="#e2e2e2" stroke="#e2e2e2" stroke-width="0.12">convcolonly</text>
<rect x="560" y="302" width="297.5" height="281" rx="4" fill="#3d3d3d"/>
<path d="M569.2 312.6L573.5 316.9L577.8 312.6" fill="none" stroke="#d8d8d8" stroke-width="1.1"/>
<text transform="translate(582.75 319) scale(1.0816 1)" fill="#e2e2e2" stroke="#e2e2e2" stroke-width="0.12">Transform</text>
<rect x="841" y="313" width="1.2" height="1.2" fill="#161616"/><rect x="841" y="314.2" width="1.2" height="0.8" fill="#5a5a5a"/><rect x="841" y="316" width="1.2" height="1.2" fill="#161616"/><rect x="841" y="317.2" width="1.2" height="0.8" fill="#5a5a5a"/><rect x="844" y="313" width="1.2" height="1.2" fill="#161616"/><rect x="844" y="314.2" width="1.2" height="0.8" fill="#5a5a5a"/><rect x="844" y="316" width="1.2" height="1.2" fill="#161616"/><rect x="844" y="317.2" width="1.2" height="0.8" fill="#5a5a5a"/><rect x="847" y="313" width="1.2" height="1.2" fill="#161616"/><rect x="847" y="314.2" width="1.2" height="0.8" fill="#5a5a5a"/><rect x="847" y="316" width="1.2" height="1.2" fill="#161616"/><rect x="847" y="317.2" width="1.2" height="0.8" fill="#5a5a5a"/><rect x="850" y="313" width="1.2" height="1.2" fill="#161616"/><rect x="850" y="314.2" width="1.2" height="0.8" fill="#5a5a5a"/><rect x="850" y="316" width="1.2" height="1.2" fill="#161616"/><rect x="850" y="317.2" width="1.2" height="0.8" fill="#5a5a5a"/>
<rect x="678" y="337" width="131.3" height="57.6" rx="4" fill="#2a2a2a" fill-opacity="0.6"/>
<rect x="678" y="336" width="131.3" height="57.6" rx="4" fill="#545454"/>
<rect x="678" y="353.8" width="131.3" height="1" fill="#3d3d3d"/>
<rect x="678" y="373.9" width="131.3" height="1" fill="#3d3d3d"/>
<text transform="translate(611.26 349) scale(1.0700 1)" fill="#dcdcdc" stroke="#dcdcdc" stroke-width="0.12">Location X</text>
<text transform="translate(717.89 349) scale(1.0700 1)" fill="#e6e6e6" stroke="#e6e6e6" stroke-width="0.12">5.5147 m</text>
<circle cx="840.1" cy="345.0" r="2" fill="#e0e0e0"/>
<use href="#lock" x="818" y="349.0"/>
<text transform="translate(659.41 368.8) scale(1.0700 1)" fill="#dcdcdc" stroke="#dcdcdc" stroke-width="0.12">Y</text>
<text transform="translate(717.89 368.8) scale(1.0700 1)" fill="#e6e6e6" stroke="#e6e6e6" stroke-width="0.12">3.7954 m</text>
<circle cx="840.1" cy="364.8" r="2" fill="#e0e0e0"/>
<use href="#lock" x="818" y="368.8"/>
<text transform="translate(659.41 388.7) scale(1.0700 1)" fill="#dcdcdc" stroke="#dcdcdc" stroke-width="0.12">Z</text>
<text transform="translate(732.87 388.7) scale(1.0700 1)" fill="#e6e6e6" stroke="#e6e6e6" stroke-width="0.12">0 m</text>
<circle cx="840.1" cy="384.7" r="2" fill="#e0e0e0"/>
<use href="#lock" x="818" y="388.7"/>
<rect x="678" y="402" width="131.3" height="57.6" rx="4" fill="#2a2a2a" fill-opacity="0.6"/>
<rect x="678" y="401" width="131.3" height="57.6" rx="4" fill="#545454"/>
<rect x="678" y="418.8" width="131.3" height="1" fill="#3d3d3d"/>
<rect x="678" y="438.9" width="131.3" height="1" fill="#3d3d3d"/>
<text transform="translate(612.33 413.8) scale(1.0700 1)" fill="#dcdcdc" stroke="#dcdcdc" stroke-width="0.12">Rotation X</text>
<text transform="translate(737.15 413.8) scale(1.0700 1)" fill="#e6e6e6" stroke="#e6e6e6" stroke-width="0.12">0°</text>
<circle cx="840.1" cy="409.8" r="2" fill="#e0e0e0"/>
<use href="#lock" x="818" y="413.8"/>
<text transform="translate(659.41 433.6) scale(1.0700 1)" fill="#dcdcdc" stroke="#dcdcdc" stroke-width="0.12">Y</text>
<text transform="translate(737.15 433.6) scale(1.0700 1)" fill="#e6e6e6" stroke="#e6e6e6" stroke-width="0.12">0°</text>
<circle cx="840.1" cy="429.6" r="2" fill="#e0e0e0"/>
<use href="#lock" x="818" y="433.6"/>
<text transform="translate(659.41 453.4) scale(1.0700 1)" fill="#dcdcdc" stroke="#dcdcdc" stroke-width="0.12">Z</text>
<text transform="translate(737.15 453.4) scale(1.0700 1)" fill="#e6e6e6" stroke="#e6e6e6" stroke-width="0.12">0°</text>
<circle cx="840.1" cy="449.4" r="2" fill="#e0e0e0"/>
<use href="#lock" x="818" y="453.4"/>
<rect x="678" y="492" width="131.3" height="57.6" rx="4" fill="#2a2a2a" fill-opacity="0.6"/>
<rect x="678" y="491" width="131.3" height="57.6" rx="4" fill="#545454"/>
<rect x="678" y="508.6" width="131.3" height="1" fill="#3d3d3d"/>
<rect x="678" y="528.7" width="131.3" height="1" fill="#3d3d3d"/>
<text transform="translate(626.24 503.6) scale(1.0700 1)" fill="#dcdcdc" stroke="#dcdcdc" stroke-width="0.12">Scale X</text>
<text transform="translate(727.52 503.6) scale(1.0700 1)" fill="#e6e6e6" stroke="#e6e6e6" stroke-width="0.12">1.000</text>
<circle cx="840.1" cy="499.6" r="2" fill="#e0e0e0"/>
<use href="#lock" x="818" y="503.6"/>
<text transform="translate(659.41 523.8) scale(1.0700 1)" fill="#dcdcdc" stroke="#dcdcdc" stroke-width="0.12">Y</text>
<text transform="translate(727.52 523.8) scale(1.0700 1)" fill="#e6e6e6" stroke="#e6e6e6" stroke-width="0.12">1.000</text>
<circle cx="840.1" cy="519.8" r="2" fill="#e0e0e0"/>
<use href="#lock" x="818" y="523.8"/>
<text transform="translate(659.41 543.8) scale(1.0700 1)" fill="#dcdcdc" stroke="#dcdcdc" stroke-width="0.12">Z</text>
<text transform="translate(727.52 543.8) scale(1.0700 1)" fill="#e6e6e6" stroke="#e6e6e6" stroke-width="0.12">1.000</text>
<circle cx="840.1" cy="539.8" r="2" fill="#e0e0e0"/>
<use href="#lock" x="818" y="543.8"/>
<text transform="translate(637.29 479) scale(1.1077 1)" fill="#dcdcdc" stroke="#dcdcdc" stroke-width="0.12">Mode</text>
<rect x="678" y="466.3" width="131.3" height="17.5" rx="4" fill="#282828"/>
<text transform="translate(685.10 479) scale(1.0140 1)" fill="#e6e6e6" stroke="#e6e6e6" stroke-width="0.12">XYZ Euler</text>
<path d="M800.4 473.4L803.2 476.2L806 473.4" fill="none" stroke="#dcdcdc" stroke-width="1.1"/>
<circle cx="840.1" cy="474.7" r="2" fill="#e0e0e0"/>
<path d="M585.5 566.5L589.8 570.8L585.5 575.1" fill="none" stroke="#d8d8d8" stroke-width="1.1"/>
<text transform="translate(595.42 575.25) scale(1.0812 1)" fill="#e2e2e2" stroke="#e2e2e2" stroke-width="0.12">Delta Transform</text>
<rect x="560" y="585.1" width="297.5" height="24.6" rx="4" fill="#3d3d3d"/>
<path d="M571.2 593.2L575.5 597.45L571.2 601.7" fill="none" stroke="#d8d8d8" stroke-width="1.1"/>
<text transform="translate(581.20 601.75) scale(1.0500 1)" fill="#e2e2e2" stroke="#e2e2e2" stroke-width="0.12">Relations</text>
<rect x="841" y="596" width="1.2" height="1.2" fill="#161616"/><rect x="841" y="597.2" width="1.2" height="0.8" fill="#5a5a5a"/><rect x="841" y="599" width="1.2" height="1.2" fill="#161616"/><rect x="841" y="600.2" width="1.2" height="0.8" fill="#5a5a5a"/><rect x="844" y="596" width="1.2" height="1.2" fill="#161616"/><rect x="844" y="597.2" width="1.2" height="0.8" fill="#5a5a5a"/><rect x="844" y="599" width="1.2" height="1.2" fill="#161616"/><rect x="844" y="600.2" width="1.2" height="0.8" fill="#5a5a5a"/><rect x="847" y="596" width="1.2" height="1.2" fill="#161616"/><rect x="847" y="597.2" width="1.2" height="0.8" fill="#5a5a5a"/><rect x="847" y="599" width="1.2" height="1.2" fill="#161616"/><rect x="847" y="600.2" width="1.2" height="0.8" fill="#5a5a5a"/><rect x="850" y="596" width="1.2" height="1.2" fill="#161616"/><rect x="850" y="597.2" width="1.2" height="0.8" fill="#5a5a5a"/><rect x="850" y="599" width="1.2" height="1.2" fill="#161616"/><rect x="850" y="600.2" width="1.2" height="0.8" fill="#5a5a5a"/>
<rect x="560" y="611.9" width="297.5" height="20" rx="4" fill="#3d3d3d"/><path d="M571.2 619.6L573.6 622" fill="none" stroke="#d8d8d8" stroke-width="1.1"/>
</svg></body></html>
